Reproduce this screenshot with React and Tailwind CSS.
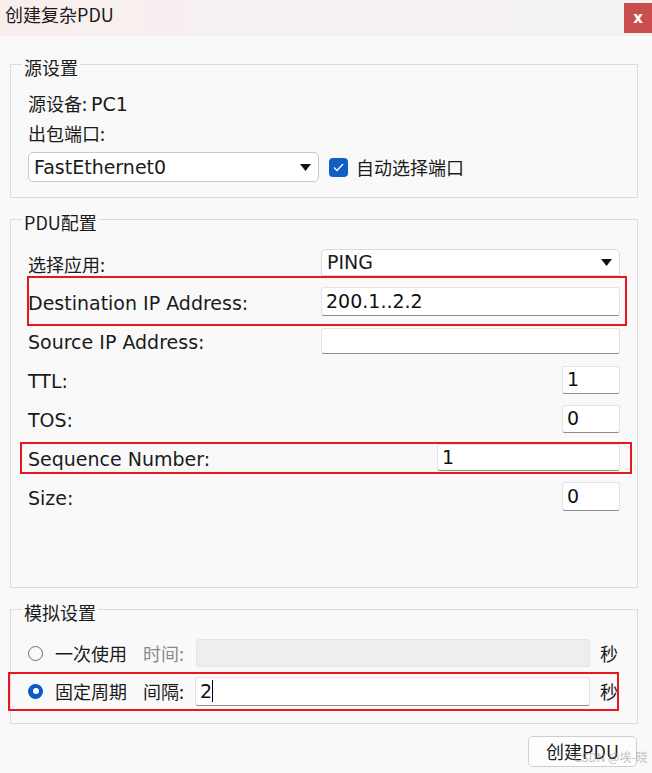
import React from "react";

const LATIN = { fontFamily: '"DejaVu Sans", "Noto Sans CJK SC", sans-serif' };
const CJK = { fontFamily: '"Noto Sans CJK SC", "DejaVu Sans", sans-serif' };

function Arrow() {
  return (
    <svg width="11" height="7" viewBox="0 0 11 7">
      <path d="M0 0 H11 L5.5 7 Z" fill="#111" />
    </svg>
  );
}

function TextBox({ className = "", children }) {
  return (
    <div
      className={`bg-white border border-[#e4e4e4] border-b-[#8c8c8c] rounded-[3px] flex items-center px-[4px] text-[19px] text-[#111] ${className}`}
      style={LATIN}
    >
      {children}
    </div>
  );
}

function Row({ label, cjk, children }) {
  return (
    <div className="h-[39px] flex items-center justify-between pr-[17px]">
      <span
        className={`${cjk ? "text-[18px]" : "text-[19px]"} text-[#1b1b1b] pt-[3px]`}
        style={cjk ? CJK : LATIN}
      >
        {label}
      </span>
      {children}
    </div>
  );
}

function Legend({ children }) {
  return (
    <legend className="ml-[11px] px-[2px] pt-[6px] leading-[24px] text-[18px]" style={CJK}>
      {children}
    </legend>
  );
}

export default function App() {
  return (
    <div className="relative w-[652px] h-[773px] bg-[#f9f9f9] overflow-hidden text-[#1b1b1b]">
      {/* Title bar */}
      <div className="h-[36px] flex items-start bg-linear-to-r from-[#f9eeee] via-[#f6f1f1] to-[#f3f1f1]">
        <span className="pl-[5px] pt-[2px] text-[18px] leading-[24px]" style={CJK}>
          创建复杂PDU
        </span>
        <div
          className="ml-auto mt-[3px] w-[28px] h-[30px] bg-[#c94e4e] text-white text-[15px] font-bold flex items-center justify-center"
          style={LATIN}
        >
          x
        </div>
      </div>

      <div className="ml-[10px] w-[628px]">
        {/* 源设置 */}
        <fieldset className="mt-[13px] border border-[#dcdcdc]">
          <Legend>源设置</Legend>
          <div className="pt-[11px] pl-[17px] pb-[15px]">
            <div className="h-[26px] leading-[26px] text-[18px]" style={CJK}>
              源设备: <span style={LATIN} className="text-[19px]">PC1</span>
            </div>
            <div className="mt-[4px] h-[26px] leading-[26px] text-[18px]" style={CJK}>
              出包端口:
            </div>
            <div className="mt-[6px] flex items-center">
              <div
                className="w-[291px] h-[30px] bg-white border border-[#c9c9c9] rounded-[5px] flex items-center justify-between pl-[5px] pr-[7px] text-[19px]"
                style={LATIN}
              >
                <span>FastEthernet0</span>
                <Arrow />
              </div>
              <div className="ml-[10px] w-[19px] h-[19px] rounded-[4px] bg-[#0f5fc6] flex items-center justify-center">
                <svg width="11" height="9" viewBox="0 0 11 9">
                  <path d="M1 4.5 L4 7.5 L10 1" stroke="white" strokeWidth="1.3" fill="none" />
                </svg>
              </div>
              <span className="ml-[8px] text-[18px]" style={CJK}>
                自动选择端口
              </span>
            </div>
          </div>
        </fieldset>

        {/* PDU配置 */}
        <fieldset className="mt-[6px] border border-[#dcdcdc]">
          <Legend>PDU配置</Legend>
          <div className="pl-[17px] pt-[9px] pb-[71px]">
            <Row label="选择应用:" cjk>
              <div
                className="w-[299px] h-[27px] bg-white border border-[#dadada] rounded-t-[5px] flex items-center justify-between pl-[5px] pr-[7px] text-[19px]"
                style={LATIN}
              >
                <span>PING</span>
                <Arrow />
              </div>
            </Row>
            <Row label="Destination IP Address:">
              <TextBox className="w-[299px] h-[29px]">200.1..2.2</TextBox>
            </Row>
            <Row label="Source IP Address:">
              <TextBox className="w-[299px] h-[26px]" />
            </Row>
            <Row label="TTL:">
              <TextBox className="w-[58px] h-[28px]">1</TextBox>
            </Row>
            <Row label="TOS:">
              <TextBox className="w-[58px] h-[28px]">0</TextBox>
            </Row>
            <Row label="Sequence Number:">
              <TextBox className="w-[183px] h-[27px]">1</TextBox>
            </Row>
            <Row label="Size:">
              <TextBox className="w-[58px] h-[29px]">0</TextBox>
            </Row>
          </div>
        </fieldset>

        {/* 模拟设置 */}
        <fieldset className="mt-[6px] border border-[#dcdcdc]">
          <Legend>模拟设置</Legend>
          <div className="pl-[17px] pt-[10px] pb-[13px]">
            <div className="h-[38px] flex items-center text-[18px]" style={CJK}>
              <div className="w-[15px] h-[15px] rounded-full border-[1.5px] border-[#6d6d6d] bg-[#f9f9f9]" />
              <span className="ml-[12px]">一次使用</span>
              <span className="ml-[16px] text-[#8a8a8a]">时间:</span>
              <div className="ml-[12px] w-[394px] h-[28px] bg-[#eeeeee] border border-[#e4e4e4] rounded-[3px]" />
              <span className="ml-[10px]">秒</span>
            </div>
            <div className="h-[38px] flex items-center text-[18px]" style={CJK}>
              <div className="w-[15px] h-[15px] rounded-full bg-[#0a5cc2] flex items-center justify-center">
                <div className="w-[6px] h-[6px] rounded-full bg-white" />
              </div>
              <span className="ml-[12px]">固定周期</span>
              <span className="ml-[16px]">间隔:</span>
              <TextBox className="ml-[11px] w-[395px] h-[29px]">
                <span>2</span>
                <span className="w-[1px] h-[22px] bg-black" />
              </TextBox>
              <span className="ml-[10px]">秒</span>
            </div>
          </div>
        </fieldset>

        <div className="flex justify-end mt-[12px] pr-[1px]">
          <div
            className="w-[109px] h-[31px] bg-[#fdfdfd] border border-[#cfcfcf] rounded-[5px] flex items-center justify-center text-[18px]"
            style={CJK}
          >
            创建PDU
          </div>
        </div>
      </div>

      {/* annotation boxes */}
      <div className="absolute left-[27px] top-[276px] w-[600px] h-[50px] border-2 border-[#e8161f]" />
      <div className="absolute left-[20px] top-[442px] w-[612px] h-[32px] border-2 border-[#e8161f]" />
      <div className="absolute left-[8px] top-[672px] w-[611px] h-[39px] border-2 border-[#e8161f]" />

      {/* watermark */}
      <div
        className="absolute left-[574px] top-[748px] text-[12px] text-[#9a9a9a] opacity-60 whitespace-nowrap"
        style={CJK}
      >
        CSDN @埃-晓
      </div>
    </div>
  );
}
